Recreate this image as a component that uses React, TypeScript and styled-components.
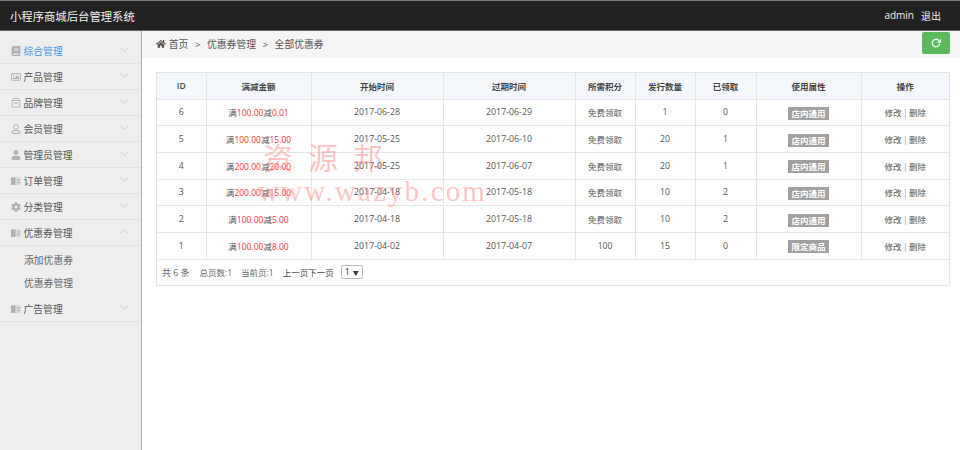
import { createGlobalStyle } from "styled-components";
import styled from "styled-components";
import { FaHome, FaRegImage, FaRegUser, FaUser, FaCog, FaBook } from "react-icons/fa";
import { FiChevronDown, FiChevronUp, FiRotateCw, FiShoppingBag } from "react-icons/fi";
import type { ReactNode } from "react";

const GlobalStyle = createGlobalStyle`
  html, body { margin: 0; padding: 0; height: 100%; background: #fff; }
  body {
    font-family: "Open Sans", "Noto Sans CJK SC", sans-serif;
    color: #555;
    overflow: hidden;
  }
`;

const Page = styled.div`
  width: 960px;
  height: 450px;
  display: flex;
  flex-direction: column;
  position: relative;
  overflow: hidden;
`;

const Header = styled.header`
  height: 31px;
  flex: none;
  box-sizing: border-box;
  background: #222;
  border-top: 1px solid #777;
  border-bottom: 1px solid #666;
  display: flex;
  align-items: center;
  justify-content: space-between;
  padding: 0 19px 0 10px;
  color: #eee;
`;

const Brand = styled.div`
  font-size: 11.35px;
`;

const UserBox = styled.div`
  display: flex;
  gap: 7px;
  font-size: 10px;
`;

const Body = styled.div`
  flex: 1;
  display: flex;
  min-height: 0;
`;

const Sidebar = styled.aside`
  width: 142px;
  flex: none;
  box-sizing: border-box;
  background: #eee;
  border-right: 1px solid #aaa;
  padding-top: 7px;
`;

const MenuItem = styled.div<{ $active?: boolean }>`
  height: 26px;
  box-sizing: border-box;
  border-bottom: 1px solid #e3e3e3;
  display: flex;
  align-items: center;
  padding: 0 9px 0 11px;
  font-size: 9.8px;
  color: ${(p) => (p.$active ? "#3f96ef" : "#555")};
`;

const MenuIcon = styled.span`
  width: 12.5px;
  flex: none;
  display: flex;
  color: #b0b0b0;
  font-size: 10px;
`;

const MenuLabel = styled.span`
  flex: 1;
`;

const Caret = styled.span`
  display: flex;
  color: #ccc;
  font-size: 15px;
  margin-top: -2px;
`;

const SubMenu = styled.div`
  padding: 2px 0 1px;
  border-bottom: 1px solid #eee;
`;

const SubItem = styled.div`
  height: 23px;
  padding-left: 24px;
  display: flex;
  align-items: center;
  font-size: 9.8px;
  color: #666;
`;

const Main = styled.main`
  flex: 1;
  min-width: 0;
`;

const Crumbs = styled.div`
  height: 27px;
  background: #f5f5f5;
  display: flex;
  align-items: center;
  justify-content: space-between;
  padding: 0 10px 0 14px;
`;

const CrumbTrail = styled.div`
  display: flex;
  align-items: center;
  font-size: 9.8px;
  color: #555;
  gap: 6.5px;
  margin-bottom: 1px;
`;

const CrumbHome = styled.span`
  display: flex;
  align-items: center;
  gap: 3px;
`;

const RefreshButton = styled.button`
  width: 28px;
  height: 22px;
  margin-bottom: 4px;
  border: 0;
  padding: 0;
  border-radius: 2px;
  background: #5cb85c;
  color: #fff;
  font-size: 10px;
  display: flex;
  align-items: center;
  justify-content: center;
`;

const Content = styled.div`
  padding: 14px 10px 0 14px;
`;

const Panel = styled.div`
  width: 794px;
  box-sizing: border-box;
  border: 1px solid #e4e4e4;
`;

const Table = styled.table`
  width: 792px;
  border-collapse: collapse;
  table-layout: fixed;
  font-size: 8.5px;
  text-align: center;
  color: #555;
`;

const HeadCell = styled.th<{ $w: number }>`
  width: ${(p) => p.$w}px;
  box-sizing: border-box;
  height: 26px;
  padding: 0;
  font-size: 8.5px;
  font-weight: 600;
  color: #444;
  background: #f4f8fc;
  border: 1px solid #e6e6e6;
  border-top: 0;
  &:first-child { border-left: 0; }
  &:last-child { border-right: 0; }
`;

const Cell = styled.td`
  height: 26.7px;
  box-sizing: border-box;
  padding: 0;
  border: 1px solid #e6e6e6;
  &:first-child { border-left: 0; }
  &:last-child { border-right: 0; }
`;

const DateCell = styled(Cell)`
  font-size: 8.8px;
`;

const Red = styled.span`
  color: #f33;
`;

const Tag = styled.span`
  display: inline-block;
  background: #a0a0a0;
  color: #fff;
  font-size: 8.5px;
  font-weight: 600;
  line-height: 13px;
  padding: 0 3px;
  margin-top: 2px;
  vertical-align: middle;
`;

const Sep = styled.span`
  color: #6aa8d8;
  margin: 0 1.5px;
`;

const Pager = styled.div`
  height: 25px;
  display: flex;
  align-items: center;
  padding-left: 5px;
  font-size: 8.5px;
  color: #666;
`;

const PagerText = styled.span`
  margin-right: 9px;
  &:first-child {
    font-size: 8.9px;
    margin-right: 10px;
  }
`;

const PagerLink = styled.span`
  color: #444;
  margin-right: 7px;
`;

const PageSelect = styled.span`
  width: 22px;
  height: 14px;
  box-sizing: border-box;
  border: 1px solid #bbb;
  border-radius: 2px;
  display: flex;
  align-items: center;
  justify-content: space-between;
  padding: 0 3px;
  font-size: 8.8px;
  color: #333;
`;

const SelectArrow = styled.span`
  font-size: 6px;
`;

const Watermark = styled.div`
  position: absolute;
  left: 258px;
  top: 138px;
  color: #f77;
  opacity: 0.42;
  pointer-events: none;
`;

const WatermarkName = styled.div`
  font-family: "Noto Sans CJK SC", sans-serif;
  font-size: 30px;
  line-height: 36px;
  letter-spacing: 15px;
  padding-left: 5px;
`;

const WatermarkUrl = styled.div`
  font-family: "Liberation Serif", serif;
  font-size: 29px;
  line-height: 30px;
  margin-top: 2px;
  letter-spacing: 2.15px;
  white-space: nowrap;
`;

const ListIcon = () => (
  <svg width="10" height="10" viewBox="0 0 10 10" fill="currentColor">
    <path d="M0 1.5h10v7.5H0z" fillOpacity="0.35" />
    <path d="M0 1.5h4.5v7.5H0z" />
    <path d="M6 3.5h3v1H6zM6 6h3v1H6z" />
  </svg>
);

const menus: { label: string; icon: ReactNode; active?: boolean }[] = [
  { label: "综合管理", icon: <FaBook />, active: true },
  { label: "产品管理", icon: <FaRegImage /> },
  { label: "品牌管理", icon: <FiShoppingBag /> },
  { label: "会员管理", icon: <FaRegUser /> },
  { label: "管理员管理", icon: <FaUser /> },
  { label: "订单管理", icon: <ListIcon /> },
  { label: "分类管理", icon: <FaCog /> },
];

const columns: [string, number][] = [
  ["ID", 49],
  ["满减金额", 105],
  ["开始时间", 132],
  ["过期时间", 132],
  ["所需积分", 60],
  ["发行数量", 60],
  ["已领取", 61],
  ["使用属性", 105],
  ["操作", 88],
];

const rows = [
  { id: 6, full: "100.00", cut: "0.01", start: "2017-06-28", end: "2017-06-29", points: "免费领取", total: 1, got: 0, tag: "店内通用" },
  { id: 5, full: "100.00", cut: "15.00", start: "2017-05-25", end: "2017-06-10", points: "免费领取", total: 20, got: 1, tag: "店内通用" },
  { id: 4, full: "200.00", cut: "20.00", start: "2017-05-25", end: "2017-06-07", points: "免费领取", total: 20, got: 1, tag: "店内通用" },
  { id: 3, full: "200.00", cut: "15.00", start: "2017-04-18", end: "2017-05-18", points: "免费领取", total: 10, got: 2, tag: "店内通用" },
  { id: 2, full: "100.00", cut: "5.00", start: "2017-04-18", end: "2017-05-18", points: "免费领取", total: 10, got: 2, tag: "店内通用" },
  { id: 1, full: "100.00", cut: "8.00", start: "2017-04-02", end: "2017-04-07", points: "100", total: 15, got: 0, tag: "限定商品" },
];

export default function App() {
  return (
    <Page>
      <GlobalStyle />
      <Header>
        <Brand>小程序商城后台管理系统</Brand>
        <UserBox>
          <span>admin</span>
          <span>退出</span>
        </UserBox>
      </Header>
      <Body>
        <Sidebar>
          {menus.map((m) => (
            <MenuItem key={m.label} $active={m.active}>
              <MenuIcon>{m.icon}</MenuIcon>
              <MenuLabel>{m.label}</MenuLabel>
              <Caret>
                <FiChevronDown strokeWidth={1.5} />
              </Caret>
            </MenuItem>
          ))}
          <MenuItem>
            <MenuIcon>
              <ListIcon />
            </MenuIcon>
            <MenuLabel>优惠券管理</MenuLabel>
            <Caret>
              <FiChevronUp strokeWidth={1.5} />
            </Caret>
          </MenuItem>
          <SubMenu>
            <SubItem>添加优惠券</SubItem>
            <SubItem>优惠券管理</SubItem>
          </SubMenu>
          <MenuItem>
            <MenuIcon>
              <ListIcon />
            </MenuIcon>
            <MenuLabel>广告管理</MenuLabel>
            <Caret>
              <FiChevronDown strokeWidth={1.5} />
            </Caret>
          </MenuItem>
        </Sidebar>
        <Main>
          <Crumbs>
            <CrumbTrail>
              <CrumbHome>
                <FaHome />
                首页
              </CrumbHome>
              <span>&gt;</span>
              <span>优惠券管理</span>
              <span>&gt;</span>
              <span>全部优惠券</span>
            </CrumbTrail>
            <RefreshButton>
              <FiRotateCw strokeWidth={3} />
            </RefreshButton>
          </Crumbs>
          <Content>
            <Panel>
              <Table>
                <thead>
                  <tr>
                    {columns.map(([title, w]) => (
                      <HeadCell key={title} $w={w}>
                        {title}
                      </HeadCell>
                    ))}
                  </tr>
                </thead>
                <tbody>
                  {rows.map((r) => (
                    <tr key={r.id}>
                      <DateCell>{r.id}</DateCell>
                      <Cell>
                        满<Red>{r.full}</Red>减<Red>{r.cut}</Red>
                      </Cell>
                      <DateCell>{r.start}</DateCell>
                      <DateCell>{r.end}</DateCell>
                      <Cell>{r.points}</Cell>
                      <DateCell>{r.total}</DateCell>
                      <DateCell>{r.got}</DateCell>
                      <Cell>
                        <Tag>{r.tag}</Tag>
                      </Cell>
                      <Cell>
                        修改<Sep>|</Sep>删除
                      </Cell>
                    </tr>
                  ))}
                </tbody>
              </Table>
              <Pager>
                <PagerText>共 6 条</PagerText>
                <PagerText>总页数:1</PagerText>
                <PagerText>当前页:1</PagerText>
                <PagerLink>上一页下一页</PagerLink>
                <PageSelect>
                  1<SelectArrow>▼</SelectArrow>
                </PageSelect>
              </Pager>
            </Panel>
          </Content>
        </Main>
      </Body>
      <Watermark>
        <WatermarkName>资源邦</WatermarkName>
        <WatermarkUrl>www.wazyb.com</WatermarkUrl>
      </Watermark>
    </Page>
  );
}
